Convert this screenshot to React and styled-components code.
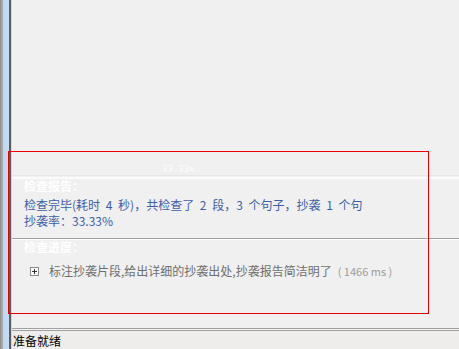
import React from 'react';
import styled, { createGlobalStyle } from 'styled-components';

const GlobalStyle = createGlobalStyle`
  html, body {
    margin: 0;
    padding: 0;
    background: #f0f0f0;
  }
  body {
    font-family: "Noto Sans CJK SC", "Noto Sans", sans-serif;
  }
`;

const Page = styled.div`
  position: relative;
  display: flex;
  width: 459px;
  height: 349px;
  overflow: hidden;
  background: #f0f0f0;
`;

const LeftRail = styled.div`
  width: 12px;
  flex-shrink: 0;
  background: linear-gradient(
    to right,
    #8e8e8e 0px,
    #b4b4b4 3px,
    #bcd6f2 3px,
    #c4dcf6 9px,
    #5c5c5c 9px,
    #5c5c5c 11px,
    #d6d6d6 11px
  );
`;

const Main = styled.div`
  flex: 1;
  display: flex;
  flex-direction: column;
`;

const TopArea = styled.div`
  height: 176px;
  display: flex;
  align-items: flex-end;
  padding-left: 150px;
  box-sizing: border-box;
`;

const FaintLabel = styled.span`
  font-family: "DejaVu Sans Mono", monospace;
  font-size: 9px;
  line-height: 12px;
  color: #fcfcfc;
`;

const SoftRule = styled.div`
  height: 1px;
  border-top: 1px solid #e6e6e6;
  border-bottom: 2px solid #fbfbfb;
`;

const HardRule = styled.div`
  height: 0;
  border-top: 1px solid #a0a0a0;
  border-bottom: 1px solid #ffffff;
`;

const Section = styled.section`
  height: ${(p) => p.$height}px;
  padding-left: 12px;
  box-sizing: border-box;
`;

const Heading = styled.h3`
  margin: 0;
  font-size: 12px;
  line-height: 14px;
  font-weight: 700;
  color: #ffffff;
`;

const ReportLine = styled.p`
  margin: ${(p) => (p.$first ? '4px' : '0')} 0 0;
  font-size: 12px;
  line-height: 16px;
  word-spacing: 3px;
  color: #3d5ea8;
  white-space: nowrap;
`;

const ProgressItem = styled.div`
  display: flex;
  align-items: center;
  margin-top: 9px;
  padding-left: 6px;
  height: 16px;
`;

const Expander = styled.svg`
  width: 9px;
  height: 9px;
  margin-right: 10px;
  flex-shrink: 0;
`;

const ItemText = styled.span`
  font-size: 12px;
  line-height: 16px;
  color: #6e6e6e;
`;

const Elapsed = styled.span`
  font-size: 11px;
  line-height: 16px;
  color: #9c9c9c;
  margin-left: 6px;
`;

const Spacer = styled.div`
  flex: 1;
`;

const DoubleRule = styled.div`
  height: 1px;
  border-top: 1px solid #a0a0a0;
  border-bottom: 1px solid #a0a0a0;
  background: #f4f4f4;
`;

const StatusBar = styled.div`
  height: 18px;
  display: flex;
  align-items: center;
  padding-left: 1px;
  background: #efecec;
  font-size: 12px;
  color: #000;
`;

const Highlight = styled.div`
  position: absolute;
  left: 8px;
  top: 151px;
  width: 421px;
  height: 163px;
  box-sizing: border-box;
  border: 1px solid #e60000;
  pointer-events: none;
`;

const PlusBox = () => (
  <Expander viewBox="0 0 9 9">
    <rect x="0.5" y="0.5" width="8" height="8" fill="#fafafa" stroke="#8a8a8a" />
    <path d="M2 4.5h5M4.5 2v5" stroke="#333" strokeWidth="1" />
  </Expander>
);

export default function App() {
  return (
    <>
      <GlobalStyle />
      <Page>
        <LeftRail />
        <Main>
          <TopArea>
            <FaintLabel>33.33%</FaintLabel>
          </TopArea>
          <SoftRule />
          <Section $height={59}>
            <Heading>检查报告：</Heading>
            <ReportLine $first>检查完毕(耗时 4 秒)，共检查了 2 段，3 个句子，抄袭 1 个句</ReportLine>
            <ReportLine>抄袭率：33.33%</ReportLine>
          </Section>
          <HardRule />
          <Section $height={88}>
            <Heading>检查进度：</Heading>
            <ProgressItem>
              <PlusBox />
              <ItemText>标注抄袭片段,给出详细的抄袭出处,抄袭报告简洁明了</ItemText>
              <Elapsed>( 1466 ms )</Elapsed>
            </ProgressItem>
          </Section>
          <Spacer />
          <DoubleRule />
          <StatusBar>准备就绪</StatusBar>
        </Main>
        <Highlight />
      </Page>
    </>
  );
}
